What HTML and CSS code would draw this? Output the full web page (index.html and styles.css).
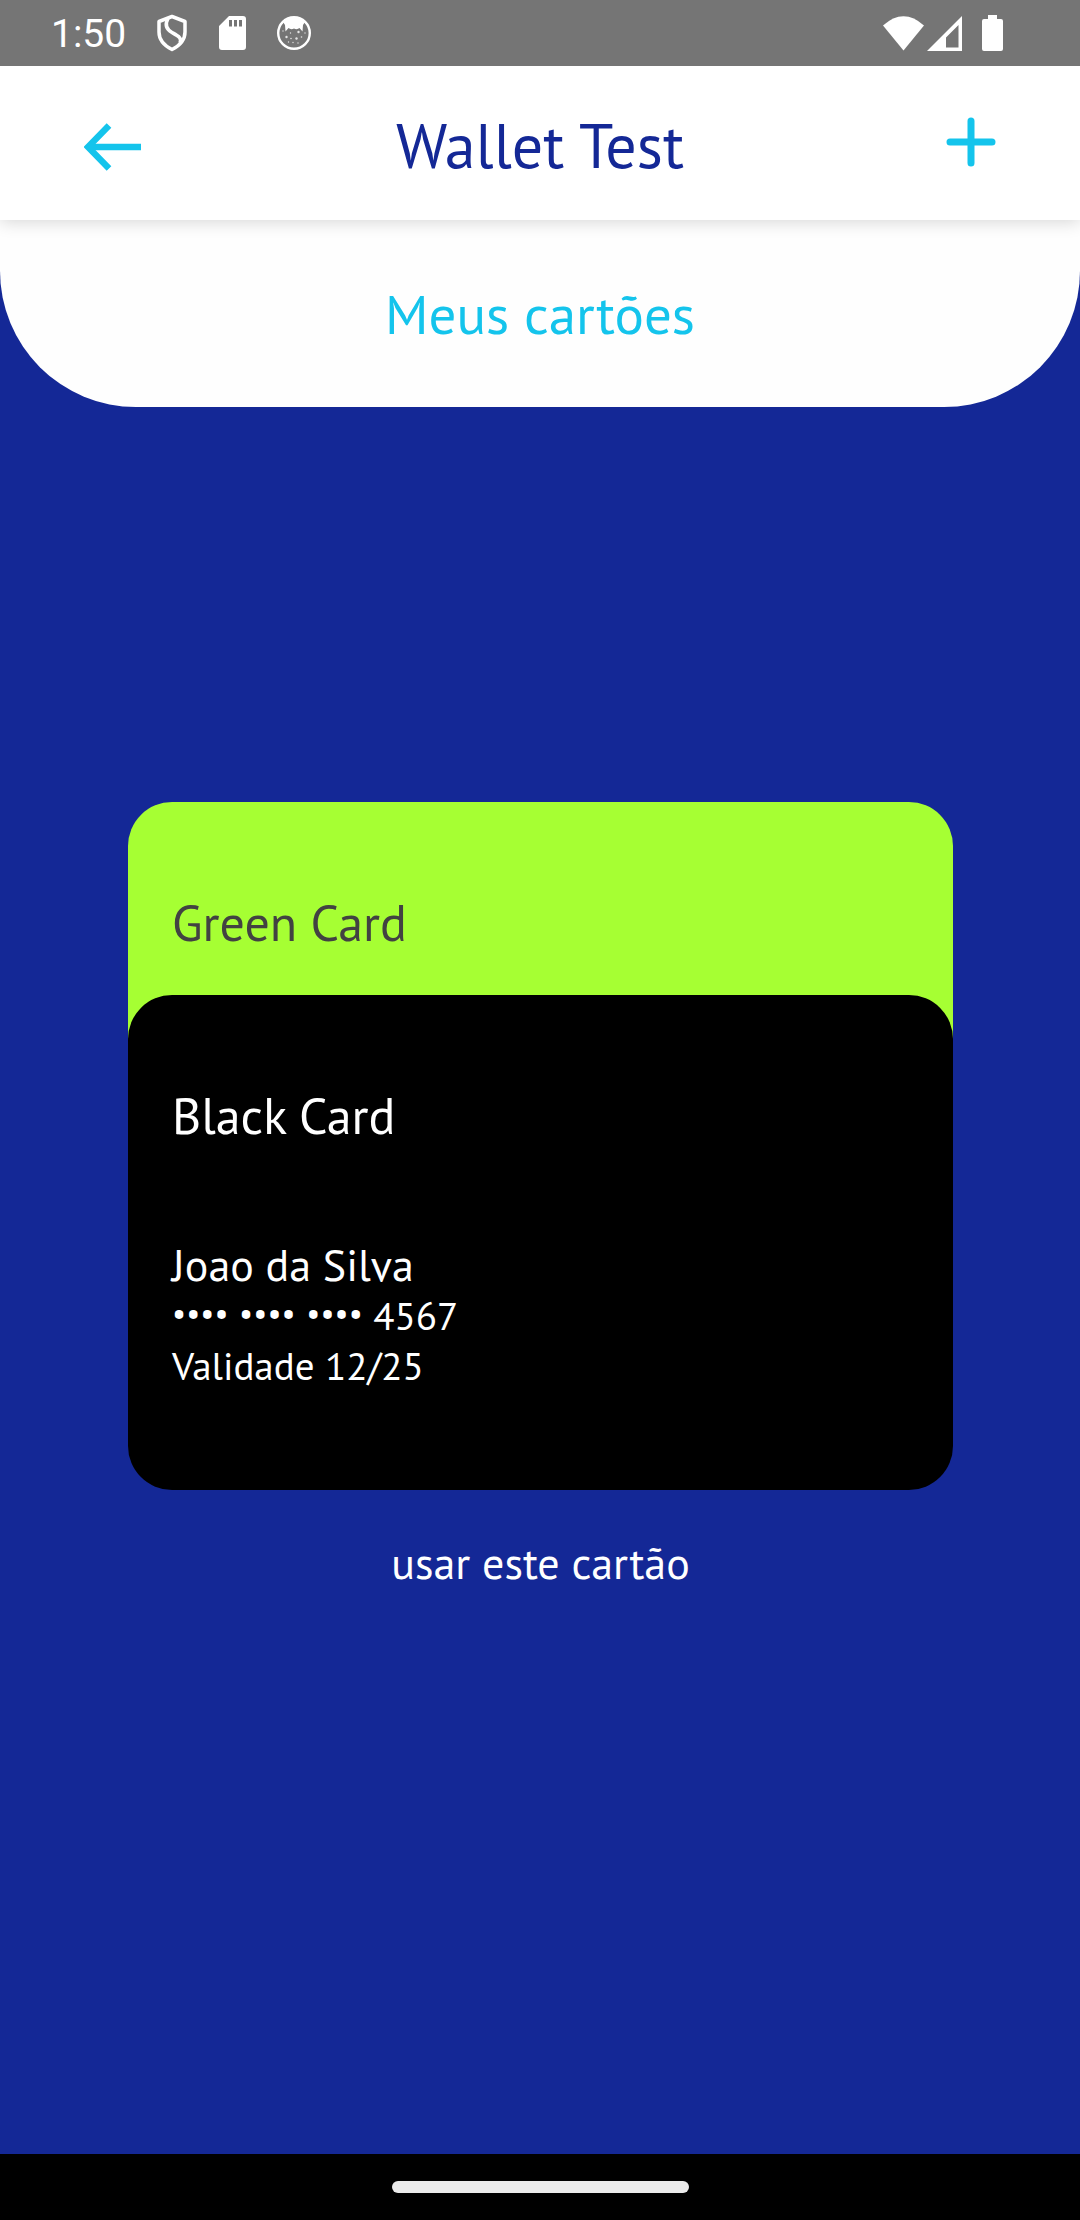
FILE: index.html
```html
<!DOCTYPE html>
<html lang="pt-BR">
<head>
<meta charset="utf-8">
<meta name="viewport" content="width=device-width, initial-scale=1">
<title>Wallet Test</title>
<link rel="stylesheet" href="styles.css">
</head>
<body>
<div class="status-bar">
  <div class="status-group status-left">
    <span class="clock">1:50</span>
    <svg width="30" height="38" viewBox="0 0 30 38" fill="none" stroke="#fff" stroke-width="3.500" stroke-linejoin="round" aria-hidden="true">
      <path d="M15 2.500 L28 7.500 V18 C28 26 22 32 15 35.500 C8 32 2 26 2 18 V7.500 Z"/>
      <path d="M11 4.500 C8 10 9 15 15 18.500 C22 22.500 25 24 23 29"/>
    </svg>
    <svg width="28" height="34" viewBox="0 0 28 34" aria-hidden="true">
      <path fill="#fff" fill-rule="evenodd" d="M11 0 H25 Q28 0 28 3 V31 Q28 34 25 34 H4 Q1 34 1 31 V10 Z M11 4 V10.500 H14 V4 Z M16 4 V10.500 H19 V4 Z M21 4 V10.500 H24 V4 Z"/>
    </svg>
    <svg width="34" height="34" viewBox="0 0 34 34" aria-hidden="true">
      <circle cx="17" cy="17" r="15.800" fill="none" stroke="#fff" stroke-width="2.400"/>
      <path fill="#fff" d="M6 6 Q17 -3 28 6 L26 9 L25.500 15.500 L22.500 12 Q20 14 17 12.500 Q14 14 11.500 12 L8.500 15.500 L8 9 Z"/>
      <g fill="#e4e4e4">
        <circle cx="21.500" cy="16" r="1.200"/><circle cx="9.500" cy="21" r="1.200"/><circle cx="19.500" cy="22.500" r="1.200"/>
        <circle cx="13.500" cy="17" r=".7"/><circle cx="6" cy="15" r=".7"/><circle cx="14" cy="22.500" r=".8"/><circle cx="24.500" cy="21" r=".8"/>
        <circle cx="28" cy="17" r=".7"/><circle cx="11.500" cy="26" r=".7"/><circle cx="16" cy="26.500" r=".7"/><circle cx="21" cy="27" r=".7"/>
      </g>
    </svg>
  </div>
  <div class="status-group status-right">
    <svg width="41" height="35" viewBox="0 0 41 35" aria-hidden="true">
      <path fill="#fff" d="M0 9.500 Q20.500 -9 41 9.500 L20.500 34.500 Z"/>
    </svg>
    <svg width="35" height="35" viewBox="0 0 35 35" aria-hidden="true">
      <path fill="#fff" fill-rule="evenodd" d="M35 0 V35 H0 Z M31.500 9 L19 21.500 V31.500 H31.500 Z"/>
    </svg>
    <svg class="battery" width="21" height="36" viewBox="0 0 21 36" aria-hidden="true">
      <path fill="#fff" d="M6 0 H15 V4 H19 Q21 4 21 6 V34 Q21 36 19 36 H2 Q0 36 0 34 V6 Q0 4 2 4 H6 Z"/>
    </svg>
  </div>
</div>

<header class="app-bar">
  <button class="icon-button" type="button" aria-label="Voltar">
    <svg width="57" height="48" viewBox="0 0 57 48" fill="none" stroke="#14c4ec" stroke-width="6.500" aria-hidden="true">
      <path d="M25 2.500 L4 24 L25 45.500"/><path d="M5 24 H57"/>
    </svg>
  </button>
  <h1 class="title">Wallet Test</h1>
  <button class="icon-button" type="button" aria-label="Adicionar cartão">
    <svg width="50" height="60" viewBox="0 0 50 60" fill="none" stroke="#14c4ec" stroke-width="7" stroke-linecap="round" aria-hidden="true">
      <path d="M25 4 V46 M4 25 H46"/>
    </svg>
  </button>
</header>

<main class="content">
  <div class="section-head">
    <h2 class="section-title">Meus cartões</h2>
  </div>
  <section class="deck" aria-label="Meus cartões">
    <article class="card card-green">
      <h3 class="card-name">Green Card</h3>
    </article>
    <article class="card card-black">
      <h3 class="card-name">Black Card</h3>
      <p class="card-holder">Joao da Silva</p>
      <p class="card-line"><span class="mask">••••</span> <span class="mask">••••</span> <span class="mask">••••</span> 4567</p>
      <p class="card-line">Validade 12/25</p>
    </article>
    <button class="use-card" type="button">usar este cartão</button>
  </section>
</main>

<div class="nav-bar"><div class="nav-handle"></div></div>
</body>
</html>
```

FILE: styles.css
```css
* {
  box-sizing: border-box;
  margin: 0;
  padding: 0;
}

body {
  min-height: 100vh;
  display: flex;
  flex-direction: column;
  background: #142896;
  color: #fff;
  font-family: "PT Sans", Lato, sans-serif;
}

h1, h2, h3 {
  font-weight: 400;
}

svg {
  display: block;
}

button {
  border: 0;
  background: none;
  color: inherit;
  font: inherit;
  cursor: pointer;
}

.status-bar {
  position: relative;
  z-index: 2;
  height: 66px;
  padding: 0 77px 0 51px;
  display: flex;
  justify-content: space-between;
  align-items: center;
  background: #757575;
}

.status-group {
  display: flex;
  align-items: center;
}

.status-left {
  gap: 31px;
}

.status-right {
  gap: 3px;
}

.battery {
  margin-left: 17px;
}

.clock {
  padding-top: 2px;
  font-family: Roboto, sans-serif;
  font-size: 39px;
  line-height: 48px;
}

.app-bar {
  position: relative;
  z-index: 1;
  min-height: 154px;
  padding: 8px 84px 0;
  display: flex;
  justify-content: space-between;
  align-items: center;
  background: #fff;
  box-shadow: 0 2px 16px rgba(0, 0, 0, 0.16);
}

.icon-button {
  min-width: 57px;
  display: flex;
}

.icon-button:last-child {
  justify-content: flex-end;
}

.title {
  padding-bottom: 4px;
  color: #142896;
  font-size: 62px;
  line-height: 72px;
}

.content {
  flex: 1;
}

.section-head {
  min-height: 187px;
  display: flex;
  justify-content: center;
  align-items: center;
  border-radius: 0 0 136px 136px;
  background: #fefefe;
}

.section-title {
  color: #14c4ec;
  font-size: 55px;
  line-height: 64px;
}

.deck {
  padding: 395px 127px 64px 128px;
  display: flex;
  flex-direction: column;
}

.card {
  min-height: 495px;
  padding: 89px 44px 44px;
  border-radius: 44px;
}

.card-green {
  background: #a6ff33;
  color: #424242;
}

.card-black {
  margin-top: -302px;
  background: #000;
}

.card-name {
  margin-bottom: 90px;
  font-size: 50px;
  line-height: 64px;
}

.card-holder {
  font-size: 44px;
  line-height: 53px;
}

.card-line {
  font-size: 39px;
  line-height: 50px;
}

.mask {
  font-family: Roboto, sans-serif;
  font-size: 42px;
  line-height: 1;
}

.use-card {
  align-self: center;
  margin-top: 47px;
  font-size: 44px;
  line-height: 52px;
}

.nav-bar {
  height: 66px;
  display: flex;
  justify-content: center;
  align-items: center;
  background: #000;
}

.nav-handle {
  width: 297px;
  height: 12px;
  border-radius: 6px;
  background: #ebebeb;
}
```
